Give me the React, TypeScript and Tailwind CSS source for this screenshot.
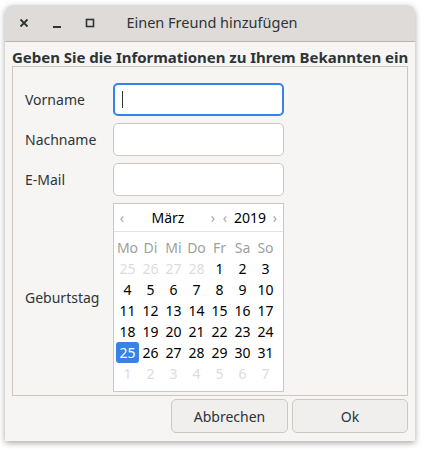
import React from "react";

const font = { fontFamily: '"Noto Sans", "Open Sans", sans-serif' };

const dayNames = ["Mo", "Di", "Mi", "Do", "Fr", "Sa", "So"];

type Cell = { n: number; other?: boolean; selected?: boolean };

const weeks: Cell[][] = [
  [{ n: 25, other: true }, { n: 26, other: true }, { n: 27, other: true }, { n: 28, other: true }, { n: 1 }, { n: 2 }, { n: 3 }],
  [4, 5, 6, 7, 8, 9, 10].map((n) => ({ n })),
  [11, 12, 13, 14, 15, 16, 17].map((n) => ({ n })),
  [18, 19, 20, 21, 22, 23, 24].map((n) => ({ n })),
  [{ n: 25, selected: true }, ...[26, 27, 28, 29, 30, 31].map((n) => ({ n }))],
  [1, 2, 3, 4, 5, 6, 7].map((n) => ({ n, other: true })),
];

const Field = ({ label, focused = false }: { label: string; focused?: boolean }) => (
  <div className="flex items-center h-[33px]">
    <div className="w-[88px] text-[14px] text-[#2e3436]">{label}</div>
    <div
      className={`w-[171px] h-[33px] rounded-[5px] bg-white flex items-center ${
        focused ? "border-2 border-[#3584e4] pl-[7px]" : "border border-[#cdc7c2]"
      }`}
    >
      {focused && <div className="w-px h-[17px] bg-[#2e3436]" />}
    </div>
  </div>
);

const Calendar = () => (
  <div className="w-[171px] border border-[#cdc7c2] bg-white">
    <div className="flex items-center h-[28px] border-b border-[#e4e2e0] text-[14px] text-black">
      <span className="w-[14px] text-center text-[#a7a7a7] ml-[1px]">‹</span>
      <span className="w-[78px] text-center">März</span>
      <span className="w-[12px] text-center text-[#a7a7a7]">›</span>
      <span className="w-[12px] text-center text-[#a7a7a7]">‹</span>
      <span className="w-[38px] text-center">2019</span>
      <span className="w-[12px] text-center text-[#a7a7a7]">›</span>
    </div>
    <div className="pl-[2px] pt-[4px] pb-[7px] text-[14px]">
      <div className="grid grid-cols-[repeat(7,23px)] h-[22px] items-center text-[#a0a0a0]">
        {dayNames.map((d) => (
          <div key={d} className="text-center">{d}</div>
        ))}
      </div>
      {weeks.map((w, i) => (
        <div key={i} className="grid grid-cols-[repeat(7,23px)] h-[21px] items-center">
          {w.map((c, j) => (
            <div
              key={j}
              className={`text-center h-[21px] leading-[21px] rounded-[3px] ${
                c.selected ? "bg-[#3584e4] text-white" : c.other ? "text-[#dcdcdc]" : "text-black"
              }`}
            >
              {c.n}
            </div>
          ))}
        </div>
      ))}
    </div>
  </div>
);

export default function App() {
  return (
    <div className="w-[424px] h-[450px] bg-white pt-[5px] pl-[5px]" style={font}>
      <div className="w-[410px] h-[436px] rounded-t-[8px] overflow-hidden flex flex-col shadow-[0_2px_6px_rgba(0,0,0,0.35)]">
        <div className="relative h-[37px] bg-[#dedbd8] border-b border-[#bdb6b0] flex items-center text-[#2e3436]">
          <div className="flex items-center pl-[11px] gap-[17px]">
            <svg width="16" height="16" viewBox="0 0 16 16">
              <path d="M4.5 4.5l7 7M11.5 4.5l-7 7" stroke="#2e3436" strokeWidth="1.8" />
            </svg>
            <svg width="16" height="16" viewBox="0 0 16 16">
              <rect x="4" y="11" width="8" height="2" fill="#2e3436" />
            </svg>
            <svg width="16" height="16" viewBox="0 0 16 16">
              <rect x="4.5" y="4.5" width="7" height="7" fill="none" stroke="#2e3436" strokeWidth="1.6" />
            </svg>
          </div>
          <div className="absolute left-0 right-0 text-center text-[14.5px] pl-[4px] pointer-events-none">
            Einen Freund hinzufügen
          </div>
        </div>
        <div className="flex-1 bg-[#f6f5f4] px-[7px] flex flex-col">
          <div className="h-[17px] mt-[7px] text-[15px] font-bold text-[#2e3436] leading-[17px] whitespace-nowrap tracking-[-0.03px]">
            Geben Sie die Informationen zu Ihrem Bekannten ein
          </div>
          <div className="h-[330px] border border-[#cdc7c2] pl-[12px] pt-[16px] flex flex-col gap-[7px]">
            <Field label="Vorname" focused />
            <Field label="Nachname" />
            <Field label="E-Mail" />
            <div className="flex items-center">
              <div className="w-[88px] text-[14px] text-[#2e3436]">Geburtstag</div>
              <Calendar />
            </div>
          </div>
          <div className="flex justify-end gap-[4px] mt-[3px]">
            <button className="w-[117px] h-[34px] rounded-[5px] border border-[#cdc7c2] bg-[#f0efee] text-[14px] text-[#2e3436]">
              Abbrechen
            </button>
            <button className="w-[116px] h-[34px] rounded-[5px] border border-[#cdc7c2] bg-[#f0efee] text-[14px] text-[#2e3436]">
              Ok
            </button>
          </div>
        </div>
      </div>
    </div>
  );
}
